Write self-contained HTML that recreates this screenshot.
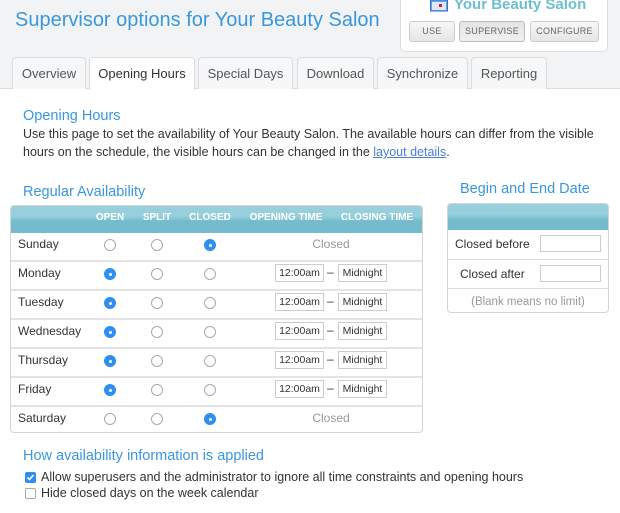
<!DOCTYPE html>
<html><head><meta charset="utf-8">
<style>
*{box-sizing:border-box;margin:0;padding:0}
body{width:620px;height:513px;overflow:hidden;background:#fff;font-family:"Liberation Sans",Arial,sans-serif;color:#333;position:relative}
.a{position:absolute}
.top{left:0;top:0;width:620px;height:89px;background:#f2f3f5;border-bottom:1px solid #ddd}
.title{left:15px;top:9px;font-size:20px;color:#3a97dd;white-space:nowrap}
.panel{left:400px;top:-8px;width:208px;height:60px;background:#fff;border:1px solid #ddd;border-radius:5px}
.btn{top:21px;height:21px;border:1px solid #ccc;border-radius:3px;background:linear-gradient(#f7f7f7,#e6e6e6);font-size:9px;color:#666;text-align:center;line-height:19px;letter-spacing:.3px}
.tab{top:57px;height:32px;border:1px solid #ddd;border-bottom:none;border-radius:4px 4px 0 0;background:#f6f7f8;font-size:13px;color:#555;text-align:center;line-height:31px}
.tab.on{background:#fff;height:33px;color:#333}
h3{position:absolute;font-weight:normal;font-size:14.5px;color:#3a97dd;white-space:nowrap}
.txt{font-size:12.5px;line-height:18px;color:#333}
.tbl{left:10px;top:205px;width:413px;height:228px;border:1px solid #d5d5d5;border-radius:4px;overflow:hidden}
.hd{left:0;top:0;width:100%;height:25px;background:linear-gradient(#97cfdc 0,#97cfdc 40%,#74bccd 60%,#74bccd 100%)}
.hd span{position:absolute;top:6px;font-size:10px;font-weight:bold;color:#fff;transform:translateX(-50%);white-space:nowrap}
.row{left:0;width:100%;height:29px;border-top:2px solid #e4e4e4;font-size:12px}
.row .d{position:absolute;left:7px;top:4px}
.r{position:absolute;top:6px;width:12px;height:12px;border-radius:50%;border:1px solid #aaa;background:#fff}
.r.c{background:#2f8ff0;border-color:#2f8ff0}
.r.c:after{content:"";position:absolute;left:3.5px;top:3.5px;width:3px;height:3px;border-radius:50%;background:#fff}
.in{position:absolute;top:2px;height:18px;border:1px solid #ccc;font-size:10.5px;text-align:center;line-height:16px;background:#fff}
.dash{position:absolute;left:316px;top:3px}
.cl{position:absolute;left:300px;top:4px;width:40px;text-align:center;color:#999;font-size:12px}
.rp{left:447px;top:203px;width:162px;height:110px;border:1px solid #d5d5d5;border-radius:4px;overflow:hidden}
.rr{left:0;width:100%;height:29px;border-top:1px solid #ddd;font-size:12px}
.box{position:absolute;left:92px;top:5px;width:61px;height:17px;border:1px solid #ccc}
.cb{position:absolute;width:11px;height:11px;border:1px solid #aaa;border-radius:2px;background:#fff}
</style></head><body>
<div class="a top"></div>
<div class="a title">Supervisor options for Your Beauty Salon</div>
<div class="a panel"></div>
<svg class="a" style="left:430px;top:0" width="18" height="12" viewBox="0 0 18 12"><rect x="0.5" y="0" width="17" height="11" fill="#6aa4e8" stroke="#3b6fc0"/><rect x="2" y="2" width="14" height="8" fill="#dce9fa"/><rect x="9" y="4" width="3" height="3" fill="#d22"/></svg>
<div class="a" style="left:454px;top:-4px;font-size:15px;font-weight:bold;color:#6dbfd0;white-space:nowrap">Your Beauty Salon</div>
<div class="a btn" style="left:409px;width:46px">USE</div>
<div class="a btn" style="left:459px;width:66px;background:linear-gradient(#e4e4e4,#f0f0f0);border-color:#bbb">SUPERVISE</div>
<div class="a btn" style="left:530px;width:69px">CONFIGURE</div>

<div class="a tab" style="left:12px;width:74px">Overview</div>
<div class="a tab on" style="left:89px;width:106px">Opening Hours</div>
<div class="a tab" style="left:198px;width:95px">Special Days</div>
<div class="a tab" style="left:297px;width:77px">Download</div>
<div class="a tab" style="left:377px;width:91px">Synchronize</div>
<div class="a tab" style="left:471px;width:76px">Reporting</div>

<h3 style="left:23px;top:108px">Opening Hours</h3>
<div class="a txt" style="left:23px;top:125px;width:600px">Use this page to set the availability of Your Beauty Salon. The available hours can differ from the visible<br>hours on the schedule, the visible hours can be changed in the <span style="color:#4a7fd8;text-decoration:underline">layout details</span>.</div>

<h3 style="left:23px;top:184px">Regular Availability</h3>
<h3 style="left:460px;top:181px">Begin and End Date</h3>

<div class="a tbl">
<div class="a hd"><span style="left:99px">OPEN</span><span style="left:146px">SPLIT</span><span style="left:199px">CLOSED</span><span style="left:275px">OPENING TIME</span><span style="left:366px">CLOSING TIME</span></div>
<div class="a row" style="top:25px;border-top-color:#74bccd"><span class="d">Sunday</span><i class="r" style="left:93px"></i><i class="r" style="left:140px"></i><i class="r c" style="left:193px"></i><span class="cl">Closed</span></div>
<div class="a row" style="top:54px"><span class="d">Monday</span><i class="r c" style="left:93px"></i><i class="r" style="left:140px"></i><i class="r" style="left:193px"></i><span class="in" style="left:264px;width:49px">12:00am</span><span class="dash">–</span><span class="in" style="left:327px;width:49px">Midnight</span></div>
<div class="a row" style="top:83px"><span class="d">Tuesday</span><i class="r c" style="left:93px"></i><i class="r" style="left:140px"></i><i class="r" style="left:193px"></i><span class="in" style="left:264px;width:49px">12:00am</span><span class="dash">–</span><span class="in" style="left:327px;width:49px">Midnight</span></div>
<div class="a row" style="top:112px"><span class="d">Wednesday</span><i class="r c" style="left:93px"></i><i class="r" style="left:140px"></i><i class="r" style="left:193px"></i><span class="in" style="left:264px;width:49px">12:00am</span><span class="dash">–</span><span class="in" style="left:327px;width:49px">Midnight</span></div>
<div class="a row" style="top:141px"><span class="d">Thursday</span><i class="r c" style="left:93px"></i><i class="r" style="left:140px"></i><i class="r" style="left:193px"></i><span class="in" style="left:264px;width:49px">12:00am</span><span class="dash">–</span><span class="in" style="left:327px;width:49px">Midnight</span></div>
<div class="a row" style="top:170px"><span class="d">Friday</span><i class="r c" style="left:93px"></i><i class="r" style="left:140px"></i><i class="r" style="left:193px"></i><span class="in" style="left:264px;width:49px">12:00am</span><span class="dash">–</span><span class="in" style="left:327px;width:49px">Midnight</span></div>
<div class="a row" style="top:199px"><span class="d">Saturday</span><i class="r" style="left:93px"></i><i class="r" style="left:140px"></i><i class="r c" style="left:193px"></i><span class="cl">Closed</span></div>
</div>

<div class="a rp">
<div class="a hd" style="height:26px"></div>
<div class="a rr" style="top:26px;border-top:none"><span style="position:absolute;left:7px;top:7px">Closed before</span><i class="box"></i></div>
<div class="a rr" style="top:55px"><span style="position:absolute;left:12px;top:7px">Closed after</span><i class="box"></i></div>
<div class="a rr" style="top:84px;color:#999;text-align:center;line-height:26px;font-size:11.5px">(Blank means no limit)</div>
</div>

<h3 style="left:23px;top:448px">How availability information is applied</h3>
<div class="a cb" style="left:25px;top:472px;background:#2f8ff0;border-color:#2f8ff0"><svg width="9" height="9" viewBox="0 0 9 9" style="position:absolute;left:0;top:0"><path d="M1.5 4.5l2 2 4-4.5" stroke="#fff" stroke-width="1.6" fill="none"/></svg></div>
<div class="a txt" style="left:41px;top:468px;white-space:nowrap">Allow superusers and the administrator to ignore all time constraints and opening hours</div>
<div class="a cb" style="left:25px;top:488px"></div>
<div class="a txt" style="left:41px;top:484px;white-space:nowrap">Hide closed days on the week calendar</div>
</body></html>
